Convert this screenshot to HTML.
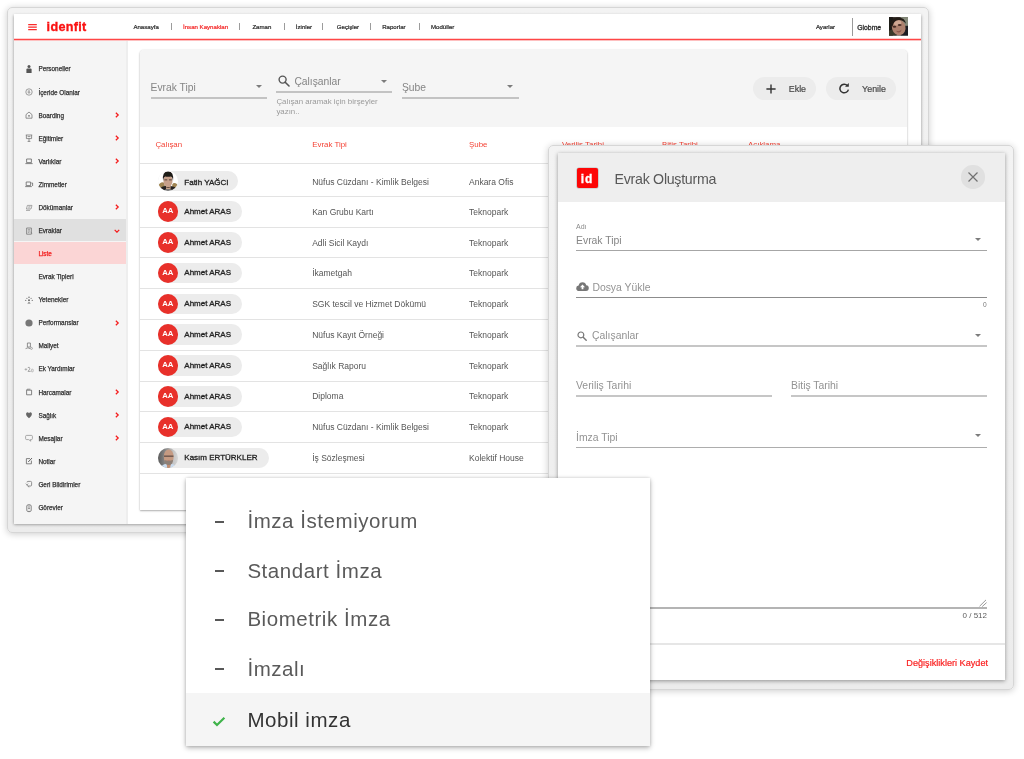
<!DOCTYPE html>
<html lang="tr">
<head>
<meta charset="utf-8">
<title>idenfit - Evrak Oluşturma</title>
<style>
*{box-sizing:border-box;margin:0;padding:0}
html,body{width:1024px;height:759px;overflow:hidden;background:#fff}
body{position:relative;font-family:"Liberation Sans",sans-serif;color:#333}
.abs{position:absolute}
#app,#dlg,#pop{will-change:transform}
.t{position:absolute;white-space:nowrap;line-height:1}
.frame{position:absolute;background:linear-gradient(#f3f3f3,#ececec);border:1px solid #d6d6d6;border-radius:5px;box-shadow:0 1px 7px rgba(0,0,0,.2)}
#win{left:7px;top:7px;width:922px;height:526px}
#app{position:absolute;left:14px;top:14px;width:907px;height:510px;background:#fff;box-shadow:0 .5px 3px rgba(0,0,0,.42);overflow:hidden}
#hdr{position:absolute;left:0;top:0;width:907px;height:27px;background:linear-gradient(#fff 0,#fff 24px,#fed0d0 24px,#fed0d0 25px,#ff4646 25px,#ff4646 26px,#fdc0c0 26px,#fdc0c0 27px);z-index:2}
#side{position:absolute;left:0;top:26.5px;width:114px;height:484px;background:#f5f5f5;border-right:2px solid #eee}
.nav{position:absolute;font-size:6.1px;-webkit-text-stroke:.22px;color:#2c2c2c;white-space:nowrap;line-height:8px;top:8.5px}
.sep{position:absolute;top:9.2px;width:1px;height:7.2px;background:#9c9c9c}
.si{position:absolute;left:24.4px;font-size:6.4px;-webkit-text-stroke:.25px;color:#333;white-space:nowrap;line-height:8px}
.chev{position:absolute;left:101.4px;width:4.2px;height:5.9px}
.ico{position:absolute;left:10.5px;width:8px;height:8px;overflow:visible}
#card{position:absolute;left:126px;top:36px;width:767px;height:460px;background:#fff;border-radius:4px 4px 0 0;box-shadow:0 1px 2px rgba(0,0,0,.3),0 0 2px rgba(0,0,0,.1);overflow:hidden}
#filt{position:absolute;left:0;top:0;width:100%;height:76.5px;background:#f5f5f5}
.ul{position:absolute;height:2px;background:#c3c3c3}
.th{position:absolute;font-size:7.9px;color:#f44336;white-space:nowrap;line-height:9px}
.rl{position:absolute;left:0;width:100%;height:1px;background:#e3e3e3}
.td{position:absolute;font-size:8.5px;color:#555;white-space:nowrap;line-height:10px}
.chip{position:absolute;left:17.5px;height:20.6px;border-radius:10.3px;background:#ececec}
.chip .av{position:absolute;left:0;top:0;width:20.6px;height:20.6px;border-radius:50%;overflow:hidden}
.chip .nm{position:absolute;left:26.8px;top:5.5px;font-size:8px;-webkit-text-stroke:.3px;color:#222;white-space:nowrap;line-height:10px}
.aa{background:#e8302a;color:#fff;font-size:7.8px;font-weight:bold;text-align:center;line-height:20.8px;letter-spacing:-.2px}
.btn{position:absolute;top:27px;height:23px;border-radius:11.5px;background:#ececec}
.fl{font-size:10.3px;color:#858585}
.bt{top:7.9px;font-size:8.9px;color:#484848;-webkit-text-stroke:.2px}
#dwin{left:547.5px;top:144.5px;width:466px;height:545px}
#dlg{position:absolute;left:558px;top:153px;width:447px;height:527px;background:#fff;box-shadow:0 .5px 4px rgba(0,0,0,.4);overflow:hidden}
#dhd{position:absolute;left:0;top:0;width:100%;height:49.2px;background:#eeeeee}
.dl{position:absolute;font-size:10.4px;color:#868686;white-space:nowrap;line-height:13px}
.dul{position:absolute;left:18px;width:411px;height:1px;background:#8f8f8f}
.arr{position:absolute;width:0;height:0;border-left:3.7px solid transparent;border-right:3.7px solid transparent;border-top:3.7px solid #7c7c7c}
#pop{position:absolute;left:186px;top:478px;width:464px;height:268px;background:#fff;box-shadow:0 2px 5px rgba(0,0,0,.28),0 0 3px rgba(0,0,0,.16);overflow:hidden}
.pi{position:absolute;left:61.4px;font-size:20.5px;letter-spacing:.55px;color:#5a5a5a;white-space:nowrap;line-height:24px}
.dash{position:absolute;left:28.6px;width:9.5px;height:2px;background:#585858}
</style>
</head>
<body>
<div class="frame" id="win"></div>
<div id="app">
  <div id="hdr">
  <svg class="abs" style="left:14.0px;top:9.0px;width:9px;height:8px" viewBox="0 0 9 8"><path d="M.2 1.5 H8.8 M.2 4.1 H8.8 M.2 6.7 H8.8" stroke="#fa2a2a" stroke-width="1.25"/></svg>
  <div class="t" style="left:32.6px;top:6.6px;font-size:12.6px;font-weight:bold;color:#fa1212;letter-spacing:.3px;-webkit-text-stroke:.35px">idenfit</div>
  <div class="nav" style="left:119.4px">Anasayfa</div>
  <div class="sep" style="left:157.4px"></div>
  <div class="nav" style="left:169.0px;color:#f42a2a">İnsan Kaynakları</div>
  <div class="sep" style="left:225.4px"></div>
  <div class="nav" style="left:238.4px">Zaman</div>
  <div class="sep" style="left:269.8px"></div>
  <div class="nav" style="left:281.8px">İzinler</div>
  <div class="sep" style="left:308.4px"></div>
  <div class="nav" style="left:322.8px">Geçişler</div>
  <div class="sep" style="left:356.3px"></div>
  <div class="nav" style="left:368.2px">Raporlar</div>
  <div class="sep" style="left:404.8px"></div>
  <div class="nav" style="left:417.0px">Modüller</div>
  <div class="nav" style="left:801.9px;top:9.1px">Ayarlar</div>
  <div class="abs" style="left:838.0px;top:4.0px;width:1px;height:18px;background:#9a9a9a"></div>
  <div class="nav" style="left:843.2px;font-size:6.85px;-webkit-text-stroke:.3px;top:10.3px">Globme</div>
  <div class="abs" style="left:875.0px;top:3.4px;width:19.4px;height:18.6px;overflow:hidden"><svg width="19.4" height="18.6" viewBox="0 0 20 19"><defs><filter id="b0" x="-10%" y="-10%" width="120%" height="120%"><feGaussianBlur stdDeviation=".6"/></filter></defs><rect width="20" height="19" fill="#2a241f"/><g filter="url(#b0)"><rect x="12" y="0" width="8" height="9" fill="#858a7a"/><rect x="0" y="0" width="4" height="19" fill="#1f1a16"/><path d="M12 19 L15 10 L20 9 V19Z" fill="#1d1d22"/><path d="M0 14 L5 12 L8 19 H0Z" fill="#3a3a2c"/><ellipse cx="10" cy="10.6" rx="7" ry="8.2" transform="rotate(-14 10 10.6)" fill="#ad806d"/><ellipse cx="8.8" cy="6" rx="4" ry="2.6" transform="rotate(-14 8.8 6)" fill="#cfa792"/><path d="M1.6 9 Q1.6 1 9 .4 Q16.4 .2 17.6 7 Q14.4 2.8 10 3 Q5 3.4 3.6 9.6Z" fill="#241b17"/><ellipse cx="5.6" cy="10" rx="1.9" ry="1.1" fill="#4a2e26"/><ellipse cx="11" cy="8.2" rx="2" ry="1.1" fill="#4a2e26"/><path d="M7.4 14.2 Q10.4 15.6 13.2 12.8 Q12.4 15.8 9.8 16 Q8 16 7.4 14.2Z" fill="#8c5548"/></g></svg></div>
  </div>
  <div id="side">
  <div class="abs" style="left:0;top:178.6px;width:100%;height:22.4px;background:#e0e0e0"></div>
  <div class="abs" style="left:0;top:201.0px;width:100%;height:22.3px;background:#fbd5d5"></div>
  <div class="si" style="top:24.9px">Personeller</div>
  <svg class="ico" style="top:24.5px" viewBox="0 0 8 8"><circle cx="4" cy="1.6" r="1.5" fill="#555"/><path d="M1.4 8 V4.6 Q1.4 3.4 2.6 3.4 H5.4 Q6.6 3.4 6.6 4.6 V8Z" fill="#555"/></svg>
  <div class="si" style="top:48.0px">İçeride Olanlar</div>
  <svg class="ico" style="top:47.6px" viewBox="0 0 8 8"><circle cx="4" cy="4" r="3.2" fill="none" stroke="#888" stroke-width=".8"/><path d="M2.6 3.2 H5 M2.6 4.6 H5.4 M4 2 V6" stroke="#888" stroke-width=".6" fill="none"/></svg>
  <div class="si" style="top:71.1px">Boarding</div>
  <svg class="ico" style="top:70.7px" viewBox="0 0 8 8"><path d="M1 3.6 L4 1 L7 3.6 V7.2 H1Z" fill="none" stroke="#777" stroke-width=".8"/><circle cx="4" cy="4.8" r=".9" fill="#777"/></svg>
  <svg class="chev" style="top:71.5px" viewBox="0 0 5 7"><path d="M1 .8 L3.8 3.5 L1 6.2" fill="none" stroke="#f41c1c" stroke-width="1.5"/></svg>
  <div class="si" style="top:94.1px">Eğitimler</div>
  <svg class="ico" style="top:93.7px" viewBox="0 0 8 8"><path d="M.8 1 H7.2 M1.4 1 V4.6 H6.6 V1 M4 4.6 V7.4 M2.6 7.4 H5.4 M2.6 2.6 H5.4" fill="none" stroke="#777" stroke-width=".8"/></svg>
  <svg class="chev" style="top:94.5px" viewBox="0 0 5 7"><path d="M1 .8 L3.8 3.5 L1 6.2" fill="none" stroke="#f41c1c" stroke-width="1.5"/></svg>
  <div class="si" style="top:117.2px">Varlıklar</div>
  <svg class="ico" style="top:116.8px" viewBox="0 0 8 8"><path d="M1.6 2 H6.4 V5.6 H1.6Z M.4 6.6 H7.6" fill="none" stroke="#666" stroke-width=".8"/></svg>
  <svg class="chev" style="top:117.6px" viewBox="0 0 5 7"><path d="M1 .8 L3.8 3.5 L1 6.2" fill="none" stroke="#f41c1c" stroke-width="1.5"/></svg>
  <div class="si" style="top:140.3px">Zimmetler</div>
  <svg class="ico" style="top:139.9px" viewBox="0 0 8 8"><path d="M1.2 2 H5.6 V5.6 H1.2Z M.2 6.6 H6.8 M6.4 3 H7.6 V6" fill="none" stroke="#666" stroke-width=".8"/></svg>
  <div class="si" style="top:163.4px">Dökümanlar</div>
  <svg class="ico" style="top:163.0px" viewBox="0 0 8 8"><path d="M2.4 1.4 H7 L6 5 H1.4Z M1 6.4 H5" fill="none" stroke="#888" stroke-width=".7"/><path d="M3.4 2.6 H5.6 M3 3.8 H5.2" stroke="#888" stroke-width=".5"/></svg>
  <svg class="chev" style="top:163.8px" viewBox="0 0 5 7"><path d="M1 .8 L3.8 3.5 L1 6.2" fill="none" stroke="#f41c1c" stroke-width="1.5"/></svg>
  <div class="si" style="top:186.5px">Evraklar</div>
  <svg class="ico" style="top:186.1px" viewBox="0 0 8 8"><path d="M1.6 1 H6.4 V7.2 H1.6Z" fill="none" stroke="#777" stroke-width=".8"/><path d="M2.8 2.6 H5.2 M2.8 4 H5.2 M2.8 5.4 H4.4" stroke="#777" stroke-width=".6"/><path d="M5.6 5.2 l1.6 1.2" stroke="#777" stroke-width=".8"/></svg>
  <svg class="chev" style="left:100px;top:188.2px;width:5.9px;height:4.2px" viewBox="0 0 7 5"><path d="M.8 1 L3.5 3.8 L6.2 1" fill="none" stroke="#f41c1c" stroke-width="1.5"/></svg>
  <div class="si" style="top:209.5px;color:#f21d1d">Liste</div>
  <div class="si" style="top:232.6px">Evrak Tipleri</div>
  <div class="si" style="top:255.7px">Yetenekler</div>
  <svg class="ico" style="top:255.3px" viewBox="0 0 8 8"><circle cx="4" cy="1.2" r=".8" fill="#777"/><circle cx="1.9" cy="2.4" r=".6" fill="#888"/><circle cx="6.1" cy="2.4" r=".6" fill="#888"/><circle cx=".7" cy="4.4" r=".7" fill="#888"/><circle cx="7.3" cy="4.4" r=".7" fill="#888"/><circle cx="4" cy="4.2" r="1" fill="#6a6a6a"/><path d="M2.4 7.4 Q4 5 5.6 7.4Z" fill="#6a6a6a"/></svg>
  <div class="si" style="top:278.8px">Performanslar</div>
  <svg class="ico" style="top:278.4px" viewBox="0 0 8 8"><circle cx="4" cy="4" r="3.6" fill="#777"/></svg>
  <svg class="chev" style="top:279.2px" viewBox="0 0 5 7"><path d="M1 .8 L3.8 3.5 L1 6.2" fill="none" stroke="#f41c1c" stroke-width="1.5"/></svg>
  <div class="si" style="top:301.9px">Maliyet</div>
  <svg class="ico" style="top:301.5px" viewBox="0 0 8 8"><path d="M2.4 1 H5.4 V5 H2.4Z" fill="none" stroke="#777" stroke-width=".8"/><path d="M.6 6.6 Q3 5 5 6.6" fill="none" stroke="#777" stroke-width=".8"/><circle cx="6.4" cy="6.4" r="1" fill="none" stroke="#777" stroke-width=".6"/></svg>
  <div class="si" style="top:324.9px">Ek Yardımlar</div>
  <svg class="ico" style="top:324.5px" viewBox="0 0 8 8"><path d="M-.4 4.4 H2.2 M.9 3.2 V5.6" stroke="#999" stroke-width=".7"/><path d="M2.8 2.6 Q4.6 1.6 4.8 3.2 Q4.8 4.6 3 6.4 H5.6" fill="none" stroke="#8a8a8a" stroke-width=".75"/><rect x="6.4" y="4.2" width="1.8" height="2.6" rx=".5" fill="none" stroke="#999" stroke-width=".6"/></svg>
  <div class="si" style="top:348.0px">Harcamalar</div>
  <svg class="ico" style="top:347.6px" viewBox="0 0 8 8"><path d="M1.6 2.2 H6.6 V6.8 H1.6Z" fill="none" stroke="#666" stroke-width=".8"/><path d="M1.6 2.2 L2.2 1.2 H5.4" fill="none" stroke="#666" stroke-width=".7"/></svg>
  <svg class="chev" style="top:348.4px" viewBox="0 0 5 7"><path d="M1 .8 L3.8 3.5 L1 6.2" fill="none" stroke="#f41c1c" stroke-width="1.5"/></svg>
  <div class="si" style="top:371.1px">Sağlık</div>
  <svg class="ico" style="top:370.7px" viewBox="0 0 8 8"><path d="M4 7.2 C-1.5 3.4 2.2 -.4 4 2.2 C5.8 -.4 9.5 3.4 4 7.2Z" fill="#666"/></svg>
  <svg class="chev" style="top:371.5px" viewBox="0 0 5 7"><path d="M1 .8 L3.8 3.5 L1 6.2" fill="none" stroke="#f41c1c" stroke-width="1.5"/></svg>
  <div class="si" style="top:394.2px">Mesajlar</div>
  <svg class="ico" style="top:393.8px" viewBox="0 0 8 8"><path d="M1.6 1.4 H6.4 Q7.4 1.4 7.4 2.4 V4.6 Q7.4 5.6 6.4 5.6 H5.4 L5.8 7.2 L3.6 5.6 H1.6 Q.6 5.6 .6 4.6 V2.4 Q.6 1.4 1.6 1.4Z" fill="none" stroke="#888" stroke-width=".7"/></svg>
  <svg class="chev" style="top:394.6px" viewBox="0 0 5 7"><path d="M1 .8 L3.8 3.5 L1 6.2" fill="none" stroke="#f41c1c" stroke-width="1.5"/></svg>
  <div class="si" style="top:417.3px">Notlar</div>
  <svg class="ico" style="top:416.9px" viewBox="0 0 8 8"><path d="M5 1.6 H1.4 V6.8 H6.4 V3.6" fill="none" stroke="#666" stroke-width=".8"/><path d="M3.2 5 L7 1 " stroke="#666" stroke-width="1"/></svg>
  <div class="si" style="top:440.3px">Geri Bildirimler</div>
  <svg class="ico" style="top:439.9px" viewBox="0 0 8 8"><path d="M2 2.4 Q2 1.4 3 1.4 H5.6 Q6.6 1.4 6.6 2.4 V5 Q6.6 6 5.6 6 H3 Q2 6 2 5" fill="none" stroke="#777" stroke-width=".8"/><path d="M.8 3.6 L2 5 L3.2 3.6" fill="none" stroke="#777" stroke-width=".7"/><path d="M3.4 6 L4 7.4" stroke="#777" stroke-width=".7"/></svg>
  <div class="si" style="top:463.4px">Görevler</div>
  <svg class="ico" style="top:463.0px" viewBox="0 0 8 8"><rect x="1.8" y="1" width="4.4" height="6.4" rx="1" fill="none" stroke="#666" stroke-width=".8"/><path d="M4 .2 V1 M4 7.4 V8.2 M3 3 H5 M3 4.6 H5" stroke="#666" stroke-width=".7"/></svg>
  </div>
  <div id="card"><div id="filt">
  <div class="t fl" style="left:10.6px;top:33.4px">Evrak Tipi</div>
  <div class="ul" style="left:10.5px;top:47.0px;width:116px"></div>
  <div class="arr" style="left:115.6px;top:35.2px"></div>
  <svg class="abs" style="left:138.2px;top:25.4px;width:12px;height:12px" viewBox="0 0 12 12"><circle cx="4.6" cy="4.6" r="3.5" fill="none" stroke="#555" stroke-width="1.4"/><path d="M7.2 7.2 L11 11" stroke="#555" stroke-width="1.6" stroke-linecap="round"/></svg>
  <div class="t fl" style="left:154.4px;top:27.3px">Çalışanlar</div>
  <div class="ul" style="left:136.4px;top:41.0px;width:115.8px"></div>
  <div class="arr" style="left:240.6px;top:30.0px"></div>
  <div class="t" style="left:136.4px;top:47.2px;font-size:7.9px;color:#9a9a9a;line-height:10.1px;white-space:normal;width:110px">Çalışan aramak için birşeyler<br>yazın..</div>
  <div class="t fl" style="left:262.0px;top:33.4px">Şube</div>
  <div class="ul" style="left:262.0px;top:47.0px;width:116.5px"></div>
  <div class="arr" style="left:366.6px;top:35.2px"></div>
  <div class="btn" style="left:613.2px;width:62.4px"><svg class="abs" style="left:12.6px;top:6.6px;width:10px;height:10px" viewBox="0 0 10 10"><path d="M5 .4 V9.6 M.4 5 H9.6" stroke="#333" stroke-width="1.4"/></svg><div class="t bt" style="left:35.6px">Ekle</div></div>
  <div class="btn" style="left:685.8px;width:70.2px"><svg class="abs" style="left:12.2px;top:6px;width:12px;height:11px" viewBox="0 0 12 11"><path d="M9.4 2.6 A4.3 4.3 0 1 0 10.4 6.6" fill="none" stroke="#333" stroke-width="1.5"/><path d="M7 3.8 H10.8 V0Z" fill="#333"/></svg><div class="t bt" style="left:36.3px">Yenile</div></div>
  </div>
  <div class="th" style="left:15.4px;top:90.0px">Çalışan</div>
  <div class="th" style="left:172.2px;top:90.0px">Evrak Tipi</div>
  <div class="th" style="left:329.0px;top:90.0px">Şube</div>
  <div class="th" style="left:422.0px;top:90.0px">Veriliş Tarihi</div>
  <div class="th" style="left:522.0px;top:90.0px">Bitiş Tarihi</div>
  <div class="th" style="left:608.0px;top:90.0px">Açıklama</div>
  <div class="rl" style="top:112.8px"></div>
  <div class="rl" style="top:145.9px"></div>
  <div class="chip" style="top:120.9px;width:80.6px"><div class="av"><svg width="20.6" height="20.6" viewBox="0 0 20 20"><defs><filter id="b1" x="-10%" y="-10%" width="120%" height="120%"><feGaussianBlur stdDeviation=".45"/></filter></defs><rect width="20" height="20" fill="#fff"/><g filter="url(#b1)"><path d="M0 20 V15 Q3 12.6 7 14.6 L13 14.8 Q17.4 13 20 15.6 V20Z" fill="#262423"/><path d="M.6 14.6 Q1.4 10.8 5 11 Q6.8 11.6 6.4 14.8 Q4 14.4 2.6 16.4Z" fill="#a08552"/><path d="M19.6 15 Q18.8 11.2 15.2 11.6 Q13.4 12.2 13.8 15.2 Q16.2 14.8 17.6 16.8Z" fill="#a08552"/><path d="M7.8 14 H12.2 V18 Q10 18.6 7.8 18Z" fill="#c9a48c"/><path d="M6.6 18 Q10 17 13.4 18 V20 H6.6Z" fill="#777"/><ellipse cx="9.7" cy="9.6" rx="4.4" ry="6" fill="#c7a08a"/><path d="M4.9 9.4 Q3.8 .6 9.8 .5 Q15.6 .6 14.6 9.4 Q14.2 6 12.6 5.4 Q9.6 6 7 5.4 Q5.4 6 4.9 9.4Z" fill="#1f1a18"/><path d="M6.2 8.6 H9 M10.6 8.6 H13.4" stroke="#3a2a24" stroke-width=".8"/><path d="M7.6 15.2 Q9.8 16.6 12 15.2 Q11.4 16.6 9.8 16.6 Q8.2 16.6 7.6 15.2Z" fill="#3a2a22"/></g></svg></div><div class="nm" style="top:7.5px">Fatih YAĞCI</div></div>
  <div class="td" style="left:172.2px;top:126.5px">Nüfus Cüzdanı - Kimlik Belgesi</div>
  <div class="td" style="left:329.0px;top:126.5px">Ankara Ofis</div>
  <div class="rl" style="top:176.7px"></div>
  <div class="chip" style="top:151.4px;width:84.7px"><div class="av aa">AA</div><div class="nm">Ahmet ARAS</div></div>
  <div class="td" style="left:172.2px;top:156.7px">Kan Grubu Kartı</div>
  <div class="td" style="left:329.0px;top:156.7px">Teknopark</div>
  <div class="rl" style="top:207.4px"></div>
  <div class="chip" style="top:182.2px;width:84.7px"><div class="av aa">AA</div><div class="nm">Ahmet ARAS</div></div>
  <div class="td" style="left:172.2px;top:187.5px">Adli Sicil Kaydı</div>
  <div class="td" style="left:329.0px;top:187.5px">Teknopark</div>
  <div class="rl" style="top:238.2px"></div>
  <div class="chip" style="top:212.9px;width:84.7px"><div class="av aa">AA</div><div class="nm">Ahmet ARAS</div></div>
  <div class="td" style="left:172.2px;top:218.2px">İkametgah</div>
  <div class="td" style="left:329.0px;top:218.2px">Teknopark</div>
  <div class="rl" style="top:269.0px"></div>
  <div class="chip" style="top:243.7px;width:84.7px"><div class="av aa">AA</div><div class="nm">Ahmet ARAS</div></div>
  <div class="td" style="left:172.2px;top:249.0px">SGK tescil ve Hizmet Dökümü</div>
  <div class="td" style="left:329.0px;top:249.0px">Teknopark</div>
  <div class="rl" style="top:299.7px"></div>
  <div class="chip" style="top:274.4px;width:84.7px"><div class="av aa">AA</div><div class="nm">Ahmet ARAS</div></div>
  <div class="td" style="left:172.2px;top:279.7px">Nüfus Kayıt Örneği</div>
  <div class="td" style="left:329.0px;top:279.7px">Teknopark</div>
  <div class="rl" style="top:330.5px"></div>
  <div class="chip" style="top:305.2px;width:84.7px"><div class="av aa">AA</div><div class="nm">Ahmet ARAS</div></div>
  <div class="td" style="left:172.2px;top:310.5px">Sağlık Raporu</div>
  <div class="td" style="left:329.0px;top:310.5px">Teknopark</div>
  <div class="rl" style="top:361.2px"></div>
  <div class="chip" style="top:336.0px;width:84.7px"><div class="av aa">AA</div><div class="nm">Ahmet ARAS</div></div>
  <div class="td" style="left:172.2px;top:341.3px">Diploma</div>
  <div class="td" style="left:329.0px;top:341.3px">Teknopark</div>
  <div class="rl" style="top:392.0px"></div>
  <div class="chip" style="top:366.7px;width:84.7px"><div class="av aa">AA</div><div class="nm">Ahmet ARAS</div></div>
  <div class="td" style="left:172.2px;top:372.0px">Nüfus Cüzdanı - Kimlik Belgesi</div>
  <div class="td" style="left:329.0px;top:372.0px">Teknopark</div>
  <div class="rl" style="top:422.8px"></div>
  <div class="chip" style="top:397.5px;width:111px"><div class="av"><svg width="20.6" height="20.6" viewBox="0 0 20 20"><defs><linearGradient id="g2" x1="0" x2="1" y1="0" y2="0"><stop offset="0" stop-color="#5c5c5c"/><stop offset=".3" stop-color="#808080"/><stop offset=".75" stop-color="#c6c6c6"/><stop offset="1" stop-color="#d8d8d8"/></linearGradient><filter id="b2" x="-10%" y="-10%" width="120%" height="120%"><feGaussianBlur stdDeviation=".5"/></filter></defs><rect width="20" height="20" fill="url(#g2)"/><g filter="url(#b2)"><path d="M2.6 20 Q3.6 15.6 8 15.6 L13 15.6 Q17 15.6 18 20Z" fill="#c9dbee"/><path d="M8.4 15 H12.6 L11.6 20 H9Z" fill="#c08c70"/><ellipse cx="10.4" cy="8.6" rx="4.8" ry="7.2" fill="#c59a82"/><path d="M6.2 11.6 Q10.4 13 14.6 11.6 Q14.4 16.6 10.4 16.6 Q6.4 16.6 6.2 11.6Z" fill="#8d7f76"/><path d="M9 12.2 Q10.4 11.6 11.8 12.2 Q10.4 13.4 9 12.2Z" fill="#b07a6c"/><path d="M5.8 7.9 H15" stroke="#4a3a36" stroke-width="1"/></g></svg></div><div class="nm">Kasım ERTÜRKLER</div></div>
  <div class="td" style="left:172.2px;top:402.8px">İş Sözleşmesi</div>
  <div class="td" style="left:329.0px;top:402.8px">Kolektif House</div>
  </div>
</div>
<div class="frame" id="dwin"></div>
<div id="dlg"><div id="dhd">
<div class="abs" style="left:18.5px;top:14.6px;width:21.6px;height:20.8px;background:#fd0606;border-radius:2px;box-shadow:0 0 0 .6px #b9b9b9"><div class="t" style="left:4.3px;top:5.1px;font-size:12px;font-weight:bold;color:#fff;letter-spacing:.9px;-webkit-text-stroke:.3px">id</div></div>
<div class="t" style="left:56.6px;top:18.6px;font-size:14.2px;letter-spacing:-.28px;color:#585858">Evrak Oluşturma</div>
<div class="abs" style="left:403.4px;top:12.4px;width:23.2px;height:23.2px;border-radius:50%;background:#e0e0e0"><svg class="abs" style="left:6.6px;top:6.6px;width:10px;height:10px" viewBox="0 0 10 10"><path d="M.5 .5 L9.5 9.5 M9.5 .5 L.5 9.5" stroke="#707070" stroke-width="1.2"/></svg></div>
</div>
<div class="t" style="left:18.0px;top:70.4px;font-size:7px;color:#8a8a8a">Adı</div>
<div class="dl" style="left:18.0px;top:80.6px">Evrak Tipi</div>
<div class="dul" style="top:96.9px;background:#a6a6a6;height:1.2px"></div>
<div class="arr" style="left:416.6px;top:84.8px"></div>
<svg class="abs" style="left:17.8px;top:129.4px;width:13px;height:9px" viewBox="0 0 13 9"><path d="M3.2 9 Q.2 9 .2 6.2 Q.2 3.8 2.6 3.6 Q3.2 .2 6.6 .2 Q9.6 .2 10.2 3.2 Q12.8 3.4 12.8 6 Q12.8 9 10 9Z" fill="#777"/><path d="M6.5 2.6 L9 5.2 H7.4 V7.2 H5.6 V5.2 H4Z" fill="#fff"/></svg>
<div class="dl" style="left:34.4px;top:127.6px;color:#939393">Dosya Yükle</div>
<div class="dul" style="top:143.9px;background:#8c8c8c"></div>
<div class="t" style="left:425.0px;top:149.0px;font-size:6.6px;color:#777">0</div>
<svg class="abs" style="left:19.4px;top:177.6px;width:10px;height:10px" viewBox="0 0 10 10"><circle cx="3.9" cy="3.9" r="2.9" fill="none" stroke="#777" stroke-width="1.2"/><path d="M6.2 6.2 L9.2 9.2" stroke="#777" stroke-width="1.4" stroke-linecap="round"/></svg>
<div class="dl" style="left:34.0px;top:176.4px;color:#939393">Çalışanlar</div>
<div class="dul" style="top:192.4px;background:#c6c6c6;height:1.5px"></div>
<div class="arr" style="left:416.6px;top:181.0px"></div>
<div class="dl" style="left:18.0px;top:226.4px;color:#939393">Veriliş Tarihi</div>
<div class="dul" style="top:242.4px;width:196px;background:#c6c6c6;height:1.5px"></div>
<div class="dl" style="left:233.0px;top:226.4px;color:#939393">Bitiş Tarihi</div>
<div class="dul" style="left:232.6px;top:242.4px;width:196.8px;background:#c6c6c6;height:1.5px"></div>
<div class="dl" style="left:18.0px;top:278.2px;color:#939393">İmza Tipi</div>
<div class="dul" style="top:293.5px;background:#adadad;height:1.3px"></div>
<div class="arr" style="left:416.6px;top:281.2px"></div>
<div class="dul" style="top:454.0px;background:#b4b4b4;height:1.5px"></div>
<svg class="abs" style="left:421.0px;top:446.0px;width:9px;height:9px" viewBox="0 0 9 9"><path d="M.5 7.3 L7 .9 M3.2 7.6 L7.6 3.6" stroke="#808080" stroke-width=".8"/></svg>
<div class="t" style="right:18px;top:458.6px;font-size:8px;color:#5c5c5c">0 / 512</div>
<div class="abs" style="left:0;top:490.3px;width:100%;height:1.4px;background:#e6e6e6"></div>
<div class="t" style="right:17px;top:505.6px;font-size:9.15px;-webkit-text-stroke:.2px;color:#fa2222">Değişiklikleri Kaydet</div>
</div>
<div id="pop">
<div class="abs" style="left:0;top:215.4px;width:100%;height:53px;background:#f5f5f5"></div>
<div class="pi" style="top:30.9px">İmza İstemiyorum</div>
<div class="dash" style="top:43.1px"></div>
<div class="pi" style="top:80.7px">Standart İmza</div>
<div class="dash" style="top:91.9px"></div>
<div class="pi" style="top:129.3px">Biometrik İmza</div>
<div class="dash" style="top:140.6px"></div>
<div class="pi" style="top:178.6px">İmzalı</div>
<div class="dash" style="top:190.4px"></div>
<div class="pi" style="top:229.6px;color:#333">Mobil imza</div>
<svg class="abs" style="left:26.4px;top:238.2px;width:14px;height:11px" viewBox="0 0 14 11"><path d="M1.6 5.6 L5 9 L12.4 1.8" fill="none" stroke="#3fb34a" stroke-width="2.2"/></svg>
</div>
</body>
</html>
